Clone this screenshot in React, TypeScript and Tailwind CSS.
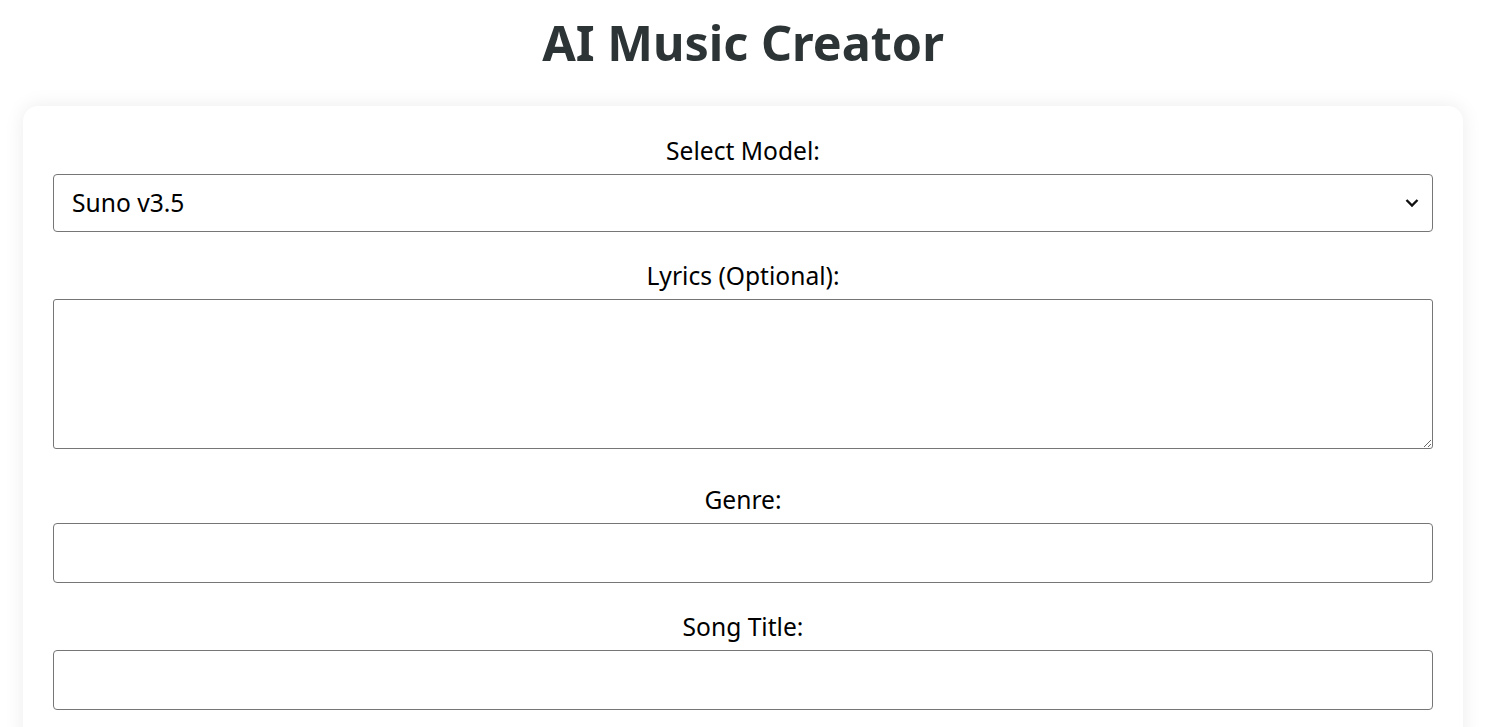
import React from "react";

const font = { fontFamily: '"Noto Sans", "Open Sans", sans-serif' };

function Label({ children }: { children: React.ReactNode }) {
  return (
    <label className="block text-center text-[24.6px] leading-[32px] text-black mb-[7px]">
      {children}
    </label>
  );
}

export default function App() {
  return (
    <div className="min-h-screen bg-white text-black" style={font}>
      <div className="w-[1440px] ml-[23px]">
        <h1 className="text-center text-[48.5px] leading-[84px] font-bold text-[#2d3436] mb-[22px]">
          AI Music Creator
        </h1>
        <div className="bg-white rounded-[15px] shadow-[0_0_20px_rgba(0,0,0,0.08)] px-[30px] pt-[29px] pb-[40px]">
          <div>
            <Label>Select Model:</Label>
            <div className="relative">
              <select className="w-full h-[58px] appearance-none border border-[#767676] rounded-[4px] pl-[18px] pr-[40px] text-[24.6px] bg-white text-black outline-none">
                <option>Suno v3.5</option>
              </select>
              <svg
                className="absolute right-[14px] top-1/2 -translate-y-1/2 pointer-events-none"
                width="14"
                height="9"
                viewBox="0 0 14 9"
              >
                <path d="M1.5 1.5 L7 7 L12.5 1.5" fill="none" stroke="#111" strokeWidth="2.4" />
              </svg>
            </div>
          </div>
          <div className="mt-[28px]">
            <Label>Lyrics (Optional):</Label>
            <textarea className="block w-full h-[150px] border border-[#767676] rounded-[3px] p-[10px] text-[24px] outline-none resize-y" />
          </div>
          <div className="mt-[35px]">
            <Label>Genre:</Label>
            <input className="block w-full h-[60px] border border-[#767676] rounded-[4px] px-[18px] text-[24px] outline-none" />
          </div>
          <div className="mt-[28px]">
            <Label>Song Title:</Label>
            <input className="block w-full h-[60px] border border-[#767676] rounded-[4px] px-[18px] text-[24px] outline-none" />
          </div>
        </div>
      </div>
    </div>
  );
}
